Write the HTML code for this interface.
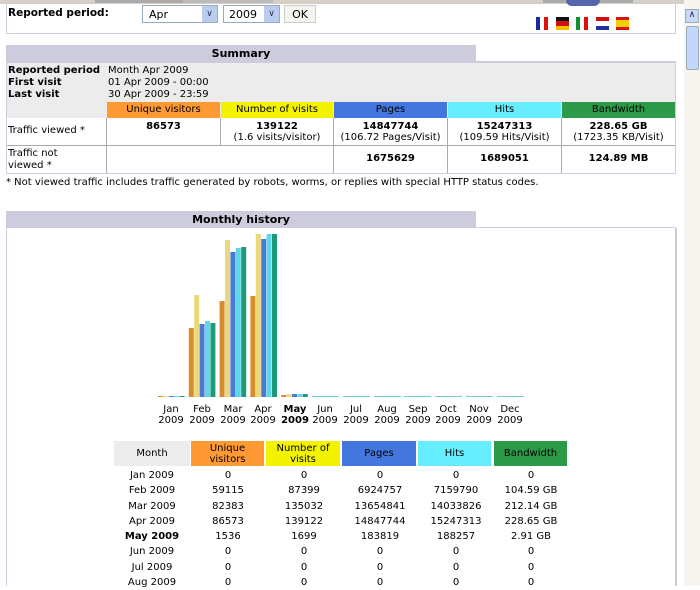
<!DOCTYPE html>
<html><head><meta charset="utf-8"><style>
*{margin:0;padding:0;box-sizing:border-box}
body{width:700px;height:586px;overflow:hidden;background:#fff;font-family:"DejaVu Sans","Liberation Sans",sans-serif;font-size:10px;color:#000;position:relative}
.a{position:absolute}
.c{text-align:center}
b{font-weight:bold}
table{border-collapse:collapse}
</style></head><body>
<!-- top strip -->
<div class="a" style="left:0;top:0;width:684px;height:4px;background:#d4d0c8"></div>
<div class="a" style="left:95px;top:0;width:88px;height:3px;background:#aaa"></div>
<div class="a" style="left:183px;top:0;width:90px;height:3px;background:#bbb"></div>
<div class="a" style="left:543px;top:0;width:90px;height:3px;background:#aaa"></div>
<!-- reported period box -->
<div class="a" style="left:6px;top:4px;width:670px;height:30px;border:1px solid #ccd;border-top:none;background:#fff"></div>
<div class="a" style="left:8px;top:7px;font-weight:bold;font-size:10.5px">Reported period:</div>
<div class="a" style="left:142px;top:5px;width:76px;height:18px;border:1px solid #9ab;background:#fff;font-size:11px;padding:2px 0 0 6px">Apr</div>
<div class="a" style="left:202px;top:6px;width:15px;height:16px;background:#b8cdf0;color:#335;font-size:9px;text-align:center;line-height:16px">&#8744;</div>
<div class="a" style="left:223px;top:5px;width:57px;height:18px;border:1px solid #9ab;background:#fff;font-size:11px;padding:2px 0 0 5px">2009</div>
<div class="a" style="left:264px;top:6px;width:15px;height:16px;background:#b8cdf0;color:#335;font-size:9px;text-align:center;line-height:16px">&#8744;</div>
<div class="a" style="left:284px;top:5px;width:32px;height:18px;border:1px solid #ccc;background:#f4f4f0;font-size:11px;text-align:center;padding-top:2px">OK</div>
<div class="a" style="left:566px;top:0;width:34px;height:6px;background:#5566aa;border-radius:0 0 17px 17px"></div>
<svg class="a" style="left:536px;top:17px" width="94" height="14">
<rect x="0" y="0" width="4" height="13" fill="#1a2aa0"/><rect x="4" y="0" width="4" height="13" fill="#fff"/><rect x="8" y="0" width="4" height="13" fill="#e01010"/>
<rect x="20" y="0" width="13" height="4" fill="#111"/><rect x="20" y="4" width="13" height="5" fill="#d01010"/><rect x="20" y="9" width="13" height="4" fill="#f0c000"/>
<rect x="40" y="0" width="4" height="13" fill="#109030"/><rect x="44" y="0" width="4" height="13" fill="#fff"/><rect x="48" y="0" width="4" height="13" fill="#e01010"/>
<rect x="60" y="0" width="13" height="4" fill="#d01010"/><rect x="60" y="4" width="13" height="5" fill="#fff"/><rect x="60" y="9" width="13" height="4" fill="#2030a0"/>
<rect x="80" y="0" width="13" height="3" fill="#e01010"/><rect x="80" y="3" width="13" height="7" fill="#f0d000"/><rect x="80" y="10" width="13" height="3" fill="#e01010"/>
</svg>
<!-- scrollbar -->
<div class="a" style="left:684px;top:0;width:16px;height:586px;background:#f6f5ef"></div>
<div class="a" style="left:685px;top:9px;width:14px;height:14px;background:#c8d8f8;border:1px solid #9ab;font-size:9px;text-align:center;color:#224">&#8743;</div>
<div class="a" style="left:686px;top:26px;width:13px;height:44px;background:#c4d6fa;border:1px solid #9ab;border-radius:2px"></div>
<div class="a" style="left:675px;top:228px;width:2px;height:358px;background:#ccc"></div>

<!-- Summary -->
<div class="a c" style="left:6px;top:45px;width:470px;height:17px;background:#ccd;font-weight:bold;font-size:11px;padding-top:2px">Summary</div>
<div class="a" style="left:476px;top:61px;width:200px;height:1px;background:#ccd"></div>
<div class="a" style="left:6px;top:62px;width:670px;height:112px;border:1px solid #ccd;background:#ececec"></div>
<div class="a" style="left:8px;top:65px"><b>Reported period</b></div><div class="a" style="left:108px;top:65px">Month Apr 2009</div>
<div class="a" style="left:8px;top:77px"><b>First visit</b></div><div class="a" style="left:108px;top:77px">01 Apr 2009 - 00:00</div>
<div class="a" style="left:8px;top:89px"><b>Last visit</b></div><div class="a" style="left:108px;top:89px">30 Apr 2009 - 23:59</div>
<div class="a" style="left:7px;top:118px;width:668px;height:55px;background:#fff"></div>
<div class="a c" style="left:107px;top:102px;width:113px;height:16px;background:#f93;padding-top:2px">Unique visitors</div>
<div class="a c" style="left:221px;top:102px;width:112px;height:16px;background:#f3f300;padding-top:2px">Number of visits</div>
<div class="a c" style="left:334px;top:102px;width:113px;height:16px;background:#4477dd;padding-top:2px">Pages</div>
<div class="a c" style="left:448px;top:102px;width:113px;height:16px;background:#66eeff;padding-top:2px">Hits</div>
<div class="a c" style="left:562px;top:102px;width:113px;height:16px;background:#2c9a48;padding-top:2px">Bandwidth</div>
<div class="a" style="left:7px;top:145px;width:668px;height:1px;background:#aaa"></div>
<div class="a" style="left:106px;top:118px;width:1px;height:55px;background:#aaa"></div>
<div class="a" style="left:220px;top:118px;width:1px;height:27px;background:#aaa"></div>
<div class="a" style="left:333px;top:118px;width:1px;height:55px;background:#aaa"></div>
<div class="a" style="left:447px;top:118px;width:1px;height:55px;background:#aaa"></div>
<div class="a" style="left:561px;top:118px;width:1px;height:55px;background:#aaa"></div>
<div class="a" style="left:8px;top:125px">Traffic viewed *</div>
<div class="a" style="left:8px;top:148px;line-height:12px">Traffic not<br>viewed *</div>
<div class="a c" style="left:107px;top:121px;width:113px"><b>86573</b></div>
<div class="a c" style="left:221px;top:121px;width:112px;line-height:11px"><b>139122</b><br>(1.6 visits/visitor)</div>
<div class="a c" style="left:334px;top:121px;width:113px;line-height:11px"><b>14847744</b><br>(106.72 Pages/Visit)</div>
<div class="a c" style="left:448px;top:121px;width:113px;line-height:11px"><b>15247313</b><br>(109.59 Hits/Visit)</div>
<div class="a c" style="left:562px;top:121px;width:113px;line-height:11px"><b>228.65 GB</b><br>(1723.35 KB/Visit)</div>
<div class="a c" style="left:334px;top:153px;width:113px"><b>1675629</b></div>
<div class="a c" style="left:448px;top:153px;width:113px"><b>1689051</b></div>
<div class="a c" style="left:562px;top:153px;width:113px"><b>124.89 MB</b></div>
<div class="a" style="left:6px;top:177px">* Not viewed traffic includes traffic generated by robots, worms, or replies with special HTTP status codes.</div>

<!-- Monthly history -->
<div class="a c" style="left:6px;top:211px;width:470px;height:17px;background:#ccd;font-weight:bold;font-size:11px;padding-top:2px">Monthly history</div>
<div class="a" style="left:476px;top:227px;width:200px;height:1px;background:#ccd"></div>
<div class="a" style="left:6px;top:228px;width:1px;height:358px;background:#ccd"></div>
<svg class="a" style="left:0;top:0" width="684" height="586">
<g id="bars"></g>
</svg>
<svg class="a" style="left:0;top:0" width="684" height="586">
<!-- Jan -->
<g fill="#d98c2e"><rect x="158" y="396" width="5" height="1"/><rect x="188.8" y="328" width="5" height="69"/><rect x="219.6" y="301" width="5" height="96"/><rect x="250.4" y="296" width="5" height="101"/><rect x="281.2" y="395" width="5" height="2"/></g>
<g fill="#ecd77c"><rect x="163.4" y="396" width="5" height="1"/><rect x="194.2" y="295" width="5" height="102"/><rect x="225" y="240" width="5" height="157"/><rect x="255.8" y="234" width="5" height="163"/><rect x="286.6" y="394" width="5" height="3"/></g>
<g fill="#4a7ad8"><rect x="168.8" y="396" width="5" height="1"/><rect x="199.6" y="324" width="5" height="73"/><rect x="230.4" y="252" width="5" height="145"/><rect x="261.2" y="239" width="5" height="158"/><rect x="292" y="394" width="5" height="3"/></g>
<g fill="#5ed8e8"><rect x="174.2" y="396" width="5" height="1"/><rect x="205" y="321" width="5" height="76"/><rect x="235.8" y="248" width="5" height="149"/><rect x="266.6" y="234" width="5" height="163"/><rect x="297.4" y="394" width="5" height="3"/></g>
<g fill="#1e9a7a"><rect x="179.6" y="396" width="5" height="1"/><rect x="210.4" y="323" width="5" height="74"/><rect x="241.2" y="247" width="5" height="150"/><rect x="272" y="234" width="5" height="163"/><rect x="302.8" y="394" width="5" height="3"/></g>
<g fill="#7cc">
<rect x="312" y="396" width="27" height="1"/><rect x="343" y="396" width="27" height="1"/><rect x="374" y="396" width="27" height="1"/><rect x="404" y="396" width="27" height="1"/><rect x="435" y="396" width="27" height="1"/><rect x="466" y="396" width="27" height="1"/><rect x="497" y="396" width="27" height="1"/>
</g>
<g font-family="DejaVu Sans, sans-serif" font-size="10" text-anchor="middle" fill="#000">
<text x="171" y="412">Jan</text><text x="171" y="423">2009</text>
<text x="202" y="412">Feb</text><text x="202" y="423">2009</text>
<text x="233" y="412">Mar</text><text x="233" y="423">2009</text>
<text x="263" y="412">Apr</text><text x="263" y="423">2009</text>
<text x="295" y="412" font-weight="bold">May</text><text x="295" y="423" font-weight="bold">2009</text>
<text x="325" y="412">Jun</text><text x="325" y="423">2009</text>
<text x="356" y="412">Jul</text><text x="356" y="423">2009</text>
<text x="387" y="412">Aug</text><text x="387" y="423">2009</text>
<text x="418" y="412">Sep</text><text x="418" y="423">2009</text>
<text x="448" y="412">Oct</text><text x="448" y="423">2009</text>
<text x="479" y="412">Nov</text><text x="479" y="423">2009</text>
<text x="510" y="412">Dec</text><text x="510" y="423">2009</text>
</g>
</svg>

<!-- monthly table -->
<div class="a c" style="left:114px;top:441px;width:76px;height:25px;background:#ececec;padding-top:7px">Month</div>
<div class="a c" style="left:191px;top:441px;width:73px;height:25px;background:#f93;line-height:11px;padding-top:2px">Unique<br>visitors</div>
<div class="a c" style="left:266px;top:441px;width:74px;height:25px;background:#f3f300;line-height:11px;padding-top:2px">Number of<br>visits</div>
<div class="a c" style="left:342px;top:441px;width:74px;height:25px;background:#4477dd;padding-top:7px">Pages</div>
<div class="a c" style="left:418px;top:441px;width:73px;height:25px;background:#66eeff;padding-top:7px">Hits</div>
<div class="a c" style="left:494px;top:441px;width:73px;height:25px;background:#2c9a48;padding-top:7px">Bandwidth</div>
<div class="a" style="left:114px;top:468px;line-height:15.3px">
<table style="font-size:10px">
<tr><td style="width:76px" class="c">Jan 2009</td><td style="width:76px" class="c">0</td><td style="width:76px" class="c">0</td><td style="width:76px" class="c">0</td><td style="width:76px" class="c">0</td><td style="width:74px" class="c">0</td></tr>
<tr><td class="c">Feb 2009</td><td class="c">59115</td><td class="c">87399</td><td class="c">6924757</td><td class="c">7159790</td><td class="c">104.59 GB</td></tr>
<tr><td class="c">Mar 2009</td><td class="c">82383</td><td class="c">135032</td><td class="c">13654841</td><td class="c">14033826</td><td class="c">212.14 GB</td></tr>
<tr><td class="c">Apr 2009</td><td class="c">86573</td><td class="c">139122</td><td class="c">14847744</td><td class="c">15247313</td><td class="c">228.65 GB</td></tr>
<tr><td class="c"><b>May 2009</b></td><td class="c">1536</td><td class="c">1699</td><td class="c">183819</td><td class="c">188257</td><td class="c">2.91 GB</td></tr>
<tr><td class="c">Jun 2009</td><td class="c">0</td><td class="c">0</td><td class="c">0</td><td class="c">0</td><td class="c">0</td></tr>
<tr><td class="c">Jul 2009</td><td class="c">0</td><td class="c">0</td><td class="c">0</td><td class="c">0</td><td class="c">0</td></tr>
<tr><td class="c">Aug 2009</td><td class="c">0</td><td class="c">0</td><td class="c">0</td><td class="c">0</td><td class="c">0</td></tr>
</table></div>
</body></html>
